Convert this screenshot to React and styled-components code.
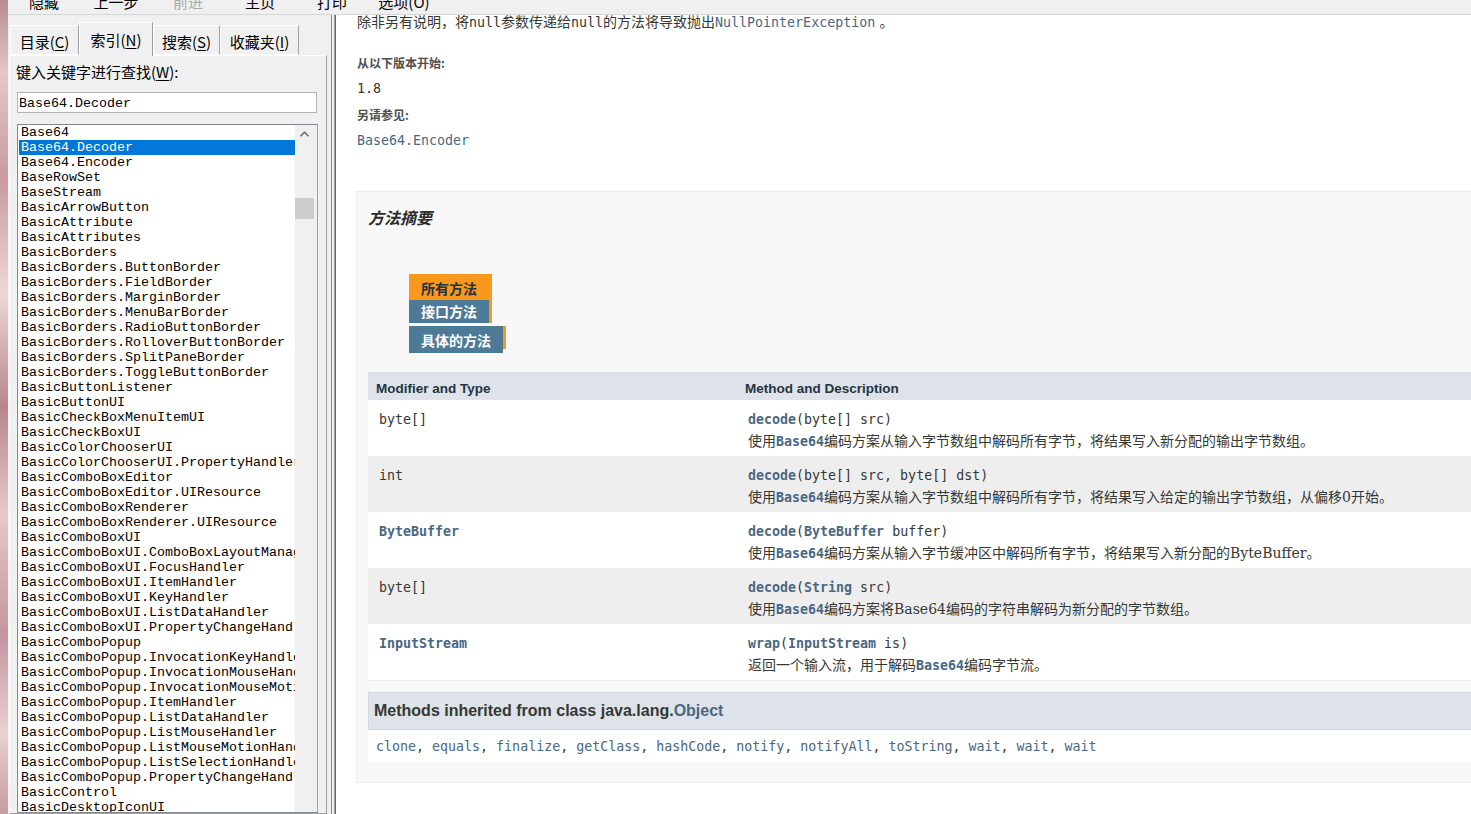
import React from "react";
import styled, { createGlobalStyle } from "styled-components";

const GlobalStyle = createGlobalStyle`
  html, body {
    margin: 0;
    padding: 0;
    overflow: hidden;
    background: #ffffff;
  }
`;

const UI_FONT = `"Noto Sans CJK SC", "Noto Sans", sans-serif`;
const LIST_FONT = `"Liberation Mono", "Noto Sans CJK SC", monospace`;
const CODE_FONT = `"DejaVu Sans Mono", "Noto Sans CJK SC", monospace`;
const BLOCK_FONT = `"DejaVu Serif", "Noto Sans CJK SC", serif`;
const HEAD_FONT = `"Liberation Sans", Arial, sans-serif`;

const Screen = styled.div`
  display: flex;
  width: 1471px;
  height: 814px;
  overflow: hidden;
`;

const Wallpaper = styled.div`
  width: 8px;
  flex-shrink: 0;
  background: linear-gradient(
    180deg,
    #b98a93 0%,
    #e4c6cb 9%,
    #c99aa3 22%,
    #efd6d9 36%,
    #b7858e 50%,
    #e8c7cb 63%,
    #c495a0 78%,
    #ead0d4 90%,
    #c79ba2 100%
  );
`;

const Window = styled.div`
  flex: 1;
  min-width: 0;
  display: flex;
  flex-direction: column;
  background: #f0f0f0;
`;

const Toolbar = styled.div`
  height: 14px;
  flex-shrink: 0;
  display: flex;
  overflow: hidden;
  background: #f0f0f0;
  border-bottom: 1px solid #d6d6d6;
`;

const ToolButton = styled.div`
  width: 72px;
  margin-top: -6px;
  text-align: center;
  font-family: ${UI_FONT};
  font-size: 15px;
  line-height: 15px;
  color: ${(p) => (p.disabled ? "#a8a8a8" : "#000")};
`;

const Main = styled.div`
  flex: 1;
  min-height: 0;
  display: flex;
`;

const NavPane = styled.div`
  width: 320px;
  flex-shrink: 0;
  display: flex;
  flex-direction: column;
  padding: 7px 0 0 1px;
  box-sizing: border-box;
  background: #f0f0f0;
`;

const TabStrip = styled.div`
  display: flex;
  align-items: flex-end;
  height: 33px;
  padding-left: 1px;
  position: relative;
  z-index: 2;
`;

const NavTab = styled.div`
  width: ${(p) => p.w}px;
  height: ${(p) => (p.active ? 34 : 30)}px;
  margin-bottom: ${(p) => (p.active ? -1 : 0)}px;
  padding-top: ${(p) => (p.active ? 7 : 6)}px;
  box-sizing: border-box;
  text-align: center;
  font-family: ${UI_FONT};
  font-size: 15px;
  line-height: 20px;
  color: #000;
  background: #f0f0f0;
  border: 1px solid #a0a0a0;
  border-left-color: #ffffff;
  border-top-color: #ffffff;
  border-bottom: ${(p) => (p.active ? "none" : "1px solid #ffffff")};

  u {
    text-decoration: underline;
    text-underline-offset: 2px;
  }
`;

const TabPanel = styled.div`
  flex: 1;
  min-height: 0;
  margin-right: 1px;
  display: flex;
  flex-direction: column;
  padding: 6px 0 0 7px;
  box-sizing: border-box;
  border: 1px solid #a0a0a0;
  border-left-color: #ffffff;
  border-top-color: #ffffff;
`;

const FieldLabel = styled.div`
  margin-left: -1px;
  font-family: ${UI_FONT};
  font-size: 15px;
  line-height: 20px;
  color: #000;

  u {
    text-decoration: underline;
    text-underline-offset: 2px;
  }
`;

const KeywordInput = styled.div`
  margin-top: 10px;
  width: 300px;
  height: 21px;
  box-sizing: border-box;
  padding: 2px 0 0 1px;
  border: 1px solid #b4b4b4;
  background: #ffffff;
  font-family: ${LIST_FONT};
  font-size: 13.33px;
  line-height: 17px;
  color: #000;
`;

const ListBox = styled.div`
  margin-top: 11px;
  width: 301px;
  flex: 1;
  min-height: 0;
  display: flex;
  box-sizing: border-box;
  border: 1px solid #828790;
  border-right-color: #a0a0a0;
  background: #ffffff;
  overflow: hidden;
`;

const ListItems = styled.div`
  flex: 1;
  min-width: 0;
  padding-left: 1px;
  display: flex;
  flex-direction: column;
`;

const ListRow = styled.div`
  flex-shrink: 0;
  height: 15px;
  padding: 1px 0 0 2px;
  box-sizing: border-box;
  font-family: ${LIST_FONT};
  font-size: 13.33px;
  line-height: 14px;
  white-space: nowrap;
  overflow: hidden;
  color: ${(p) => (p.selected ? "#ffffff" : "#000000")};
  background: ${(p) => (p.selected ? "#0078d7" : "transparent")};
`;

const ScrollBar = styled.div`
  width: 22px;
  flex-shrink: 0;
  display: flex;
  flex-direction: column;
  align-items: flex-start;
  background: #f0f0f0;
`;

const ScrollArrow = styled.div`
  width: 19px;
  height: 17px;
  display: flex;
  align-items: center;
  justify-content: center;
`;

const ScrollThumb = styled.div`
  margin-top: 56px;
  width: 19px;
  height: 21px;
  background: #cdcdcd;
`;

const Splitter = styled.div`
  width: 6px;
  flex-shrink: 0;
  display: flex;
  justify-content: center;
  background: #f0f0f0;
`;

const SplitLine = styled.div`
  width: 1px;
  background: #8a8a8a;
`;

const ContentPane = styled.div`
  flex: 1;
  min-width: 0;
  overflow: hidden;
  background: #ffffff;
  border-left: 1px solid #a0a0a0;
  box-shadow: inset 1px 0 0 #696969;
  padding-left: 21px;
  color: #353833;
`;

const BlockText = styled.div`
  margin-top: ${(p) => p.top || 0}px;
  padding-left: 1px;
  font-family: ${BLOCK_FONT};
  font-size: 14px;
  line-height: 16px;
  white-space: nowrap;
  color: #353833;
`;

const Term = styled.div`
  margin-top: ${(p) => p.top}px;
  padding-left: 1px;
  font-family: ${UI_FONT};
  font-size: 12px;
  font-weight: bold;
  line-height: 16px;
  color: #4e4e4e;
`;

const Detail = styled.div`
  margin-top: 9px;
  padding-left: 1px;
  font-family: ${CODE_FONT};
  font-size: 13.3px;
  line-height: 18px;
  color: ${(p) => (p.link ? "#4a6782" : "#353833")};
`;

const Code = styled.span`
  font-family: ${CODE_FONT};
  font-size: 13.3px;
  font-weight: ${(p) => (p.bold ? "bold" : "normal")};
  color: ${(p) => (p.link ? "#4a6782" : "#353833")};
`;

const SummaryBlock = styled.div`
  margin-top: 41px;
  width: 1200px;
  box-sizing: border-box;
  padding: 15px 0 20px 11px;
  background: #f8f8f8;
  border: 1px solid #ededed;
`;

const SummaryTitle = styled.div`
  font-family: ${UI_FONT};
  font-size: 16px;
  font-style: italic;
  font-weight: bold;
  line-height: 20px;
  color: #2c2c2c;
`;

const TabStack = styled.div`
  margin: 47px 0 0 41px;
  display: flex;
  flex-direction: column;
`;

const TabLine = styled.div`
  display: flex;
  align-items: flex-start;
  height: ${(p) => p.h}px;
  margin-top: ${(p) => p.shift || 0}px;
`;

const TabLabel = styled.div`
  height: ${(p) => p.h}px;
  margin-top: ${(p) => p.top || 0}px;
  padding: ${(p) => 5 - (p.top || 0)}px 12px 0 12px;
  box-sizing: border-box;
  font-family: ${UI_FONT};
  font-size: 14px;
  font-weight: bold;
  line-height: 18px;
  white-space: nowrap;
  color: ${(p) => (p.active ? "#253441" : "#ffffff")};
  background: ${(p) => (p.active ? "#f8981d" : "#4d7a97")};
`;

const TabEnd = styled.div`
  width: 3px;
  height: ${(p) => p.h}px;
  background: #f8981d;
`;

const MemberTable = styled.div`
  margin-top: 19px;
  border-bottom: 1px solid #eeeeef;
`;

const HeadRow = styled.div`
  display: grid;
  grid-template-columns: 370px 1fr;
  background: #dee3e9;
`;

const HeadCell = styled.div`
  padding: 8px 3px 3px ${(p) => (p.first ? 8 : 7)}px;
  font-family: ${HEAD_FONT};
  font-size: 13.5px;
  font-weight: bold;
  line-height: 17px;
  color: #253441;
`;

const BodyRow = styled.div`
  display: grid;
  grid-template-columns: 370px 1fr;
  background: ${(p) => (p.alt ? "#eeeeef" : "#ffffff")};
`;

const BodyCell = styled.div`
  padding: 8px 3px 4px ${(p) => (p.first ? 11 : 10)}px;
  line-height: 22px;
  white-space: nowrap;
`;

const CodeLine = styled.div`
  height: 22px;
  font-family: ${CODE_FONT};
  font-size: 13.3px;
  line-height: 23px;
  color: #353833;
`;

const DescLine = styled.div`
  height: 22px;
  font-family: ${BLOCK_FONT};
  font-size: 14px;
  line-height: 23px;
  color: #353833;
`;

const InheritedHead = styled.div`
  margin-top: 11px;
  padding: 8px 0 8px 5px;
  background: #dee3e9;
  border: 1px solid #d0d9e0;
  font-family: ${HEAD_FONT};
  font-size: 16px;
  font-weight: bold;
  line-height: 20px;
  color: #353833;
`;

const HeadLink = styled.span`
  color: #4a6782;
`;

const InheritedList = styled.div`
  padding: 6px 3px 5px 8px;
  background: #ffffff;
  font-family: ${CODE_FONT};
  font-size: 13.3px;
  line-height: 21px;
  color: #353833;
  white-space: nowrap;
`;

const toolbarItems = [
  { label: "隐藏" },
  { label: "上一步" },
  { label: "前进", disabled: true },
  { label: "主页" },
  { label: "打印" },
  { label: "选项(O)" },
];

const navTabs = [
  { label: "目录", key: "C", w: 69 },
  { label: "索引", key: "N", w: 74, active: true },
  { label: "搜索", key: "S", w: 67 },
  { label: "收藏夹", key: "I", w: 79 },
];

const indexEntries = [
  "Base64",
  "Base64.Decoder",
  "Base64.Encoder",
  "BaseRowSet",
  "BaseStream",
  "BasicArrowButton",
  "BasicAttribute",
  "BasicAttributes",
  "BasicBorders",
  "BasicBorders.ButtonBorder",
  "BasicBorders.FieldBorder",
  "BasicBorders.MarginBorder",
  "BasicBorders.MenuBarBorder",
  "BasicBorders.RadioButtonBorder",
  "BasicBorders.RolloverButtonBorder",
  "BasicBorders.SplitPaneBorder",
  "BasicBorders.ToggleButtonBorder",
  "BasicButtonListener",
  "BasicButtonUI",
  "BasicCheckBoxMenuItemUI",
  "BasicCheckBoxUI",
  "BasicColorChooserUI",
  "BasicColorChooserUI.PropertyHandler",
  "BasicComboBoxEditor",
  "BasicComboBoxEditor.UIResource",
  "BasicComboBoxRenderer",
  "BasicComboBoxRenderer.UIResource",
  "BasicComboBoxUI",
  "BasicComboBoxUI.ComboBoxLayoutManager",
  "BasicComboBoxUI.FocusHandler",
  "BasicComboBoxUI.ItemHandler",
  "BasicComboBoxUI.KeyHandler",
  "BasicComboBoxUI.ListDataHandler",
  "BasicComboBoxUI.PropertyChangeHandler",
  "BasicComboPopup",
  "BasicComboPopup.InvocationKeyHandler",
  "BasicComboPopup.InvocationMouseHandler",
  "BasicComboPopup.InvocationMouseMotionHandler",
  "BasicComboPopup.ItemHandler",
  "BasicComboPopup.ListDataHandler",
  "BasicComboPopup.ListMouseHandler",
  "BasicComboPopup.ListMouseMotionHandler",
  "BasicComboPopup.ListSelectionHandler",
  "BasicComboPopup.PropertyChangeHandler",
  "BasicControl",
  "BasicDesktopIconUI",
];

const B64 = () => (
  <Code bold link>
    Base64
  </Code>
);

const methods = [
  {
    type: <>byte[]</>,
    sig: (
      <>
        <Code bold link>decode</Code>(byte[] src)
      </>
    ),
    desc: (
      <>
        使用<B64 />编码方案从输入字节数组中解码所有字节，将结果写入新分配的输出字节数组。
      </>
    ),
  },
  {
    type: <>int</>,
    sig: (
      <>
        <Code bold link>decode</Code>(byte[] src, byte[] dst)
      </>
    ),
    desc: (
      <>
        使用<B64 />编码方案从输入字节数组中解码所有字节，将结果写入给定的输出字节数组，从偏移0开始。
      </>
    ),
  },
  {
    type: (
      <Code bold link>
        ByteBuffer
      </Code>
    ),
    sig: (
      <>
        <Code bold link>decode</Code>(<Code bold link>ByteBuffer</Code> buffer)
      </>
    ),
    desc: (
      <>
        使用<B64 />编码方案从输入字节缓冲区中解码所有字节，将结果写入新分配的ByteBuffer。
      </>
    ),
  },
  {
    type: <>byte[]</>,
    sig: (
      <>
        <Code bold link>decode</Code>(<Code bold link>String</Code> src)
      </>
    ),
    desc: (
      <>
        使用<B64 />编码方案将Base64编码的字符串解码为新分配的字节数组。
      </>
    ),
  },
  {
    type: (
      <Code bold link>
        InputStream
      </Code>
    ),
    sig: (
      <>
        <Code bold link>wrap</Code>(<Code bold link>InputStream</Code> is)
      </>
    ),
    desc: (
      <>
        返回一个输入流，用于解码<B64 />编码字节流。
      </>
    ),
  },
];

const inherited = [
  "clone",
  "equals",
  "finalize",
  "getClass",
  "hashCode",
  "notify",
  "notifyAll",
  "toString",
  "wait",
  "wait",
  "wait",
];

function ChevronUp() {
  return (
    <svg width="9" height="6" viewBox="0 0 9 6">
      <path d="M0.5 5.2 L4.5 1.2 L8.5 5.2" fill="none" stroke="#606060" strokeWidth="1.4" />
    </svg>
  );
}

export default function App() {
  return (
    <>
      <GlobalStyle />
      <Screen>
        <Wallpaper />
        <Window>
          <Toolbar>
            {toolbarItems.map((t) => (
              <ToolButton key={t.label} disabled={t.disabled}>
                {t.label}
              </ToolButton>
            ))}
          </Toolbar>
          <Main>
            <NavPane>
              <TabStrip>
                {navTabs.map((t) => (
                  <NavTab key={t.key} w={t.w} active={t.active}>
                    {t.label}(<u>{t.key}</u>)
                  </NavTab>
                ))}
              </TabStrip>
              <TabPanel>
                <FieldLabel>
                  键入关键字进行查找(<u>W</u>):
                </FieldLabel>
                <KeywordInput>Base64.Decoder</KeywordInput>
                <ListBox>
                  <ListItems>
                    {indexEntries.map((e, i) => (
                      <ListRow key={i} selected={e === "Base64.Decoder"}>
                        {e}
                      </ListRow>
                    ))}
                  </ListItems>
                  <ScrollBar>
                    <ScrollArrow>
                      <ChevronUp />
                    </ScrollArrow>
                    <ScrollThumb />
                  </ScrollBar>
                </ListBox>
              </TabPanel>
            </NavPane>
            <Splitter>
              <SplitLine />
            </Splitter>
            <ContentPane>
              <BlockText top={-1}>
                除非另有说明，将<Code>null</Code>参数传递给<Code>null</Code>的方法将导致抛出
                <Code link>NullPointerException</Code> 。
              </BlockText>
              <Term top={24}>从以下版本开始:</Term>
              <Detail>1.8</Detail>
              <Term top={9}>另请参见:</Term>
              <Detail link>Base64.Encoder</Detail>

              <SummaryBlock>
                <SummaryTitle>方法摘要</SummaryTitle>
                <TabStack>
                  <TabLine h={26}>
                    <TabLabel active h={26}>
                      所有方法
                    </TabLabel>
                    <TabEnd h={23} />
                  </TabLine>
                  <TabLine h={26} shift={-3}>
                    <TabLabel h={23} top={3}>
                      接口方法
                    </TabLabel>
                    <TabEnd h={26} />
                  </TabLine>
                  <TabLine h={27} shift={3}>
                    <TabLabel h={27}>具体的方法</TabLabel>
                    <TabEnd h={23} />
                  </TabLine>
                </TabStack>

                <MemberTable>
                  <HeadRow>
                    <HeadCell first>Modifier and Type</HeadCell>
                    <HeadCell>Method and Description</HeadCell>
                  </HeadRow>
                  {methods.map((m, i) => (
                    <BodyRow key={i} alt={i % 2 === 1}>
                      <BodyCell first>
                        <CodeLine>{m.type}</CodeLine>
                      </BodyCell>
                      <BodyCell>
                        <CodeLine>{m.sig}</CodeLine>
                        <DescLine>{m.desc}</DescLine>
                      </BodyCell>
                    </BodyRow>
                  ))}
                </MemberTable>

                <InheritedHead>
                  Methods inherited from class java.lang.<HeadLink>Object</HeadLink>
                </InheritedHead>
                <InheritedList>
                  {inherited.map((name, i) => (
                    <React.Fragment key={i}>
                      <Code link>{name}</Code>
                      {i < inherited.length - 1 ? ", " : ""}
                    </React.Fragment>
                  ))}
                </InheritedList>
              </SummaryBlock>
            </ContentPane>
          </Main>
        </Window>
      </Screen>
    </>
  );
}
